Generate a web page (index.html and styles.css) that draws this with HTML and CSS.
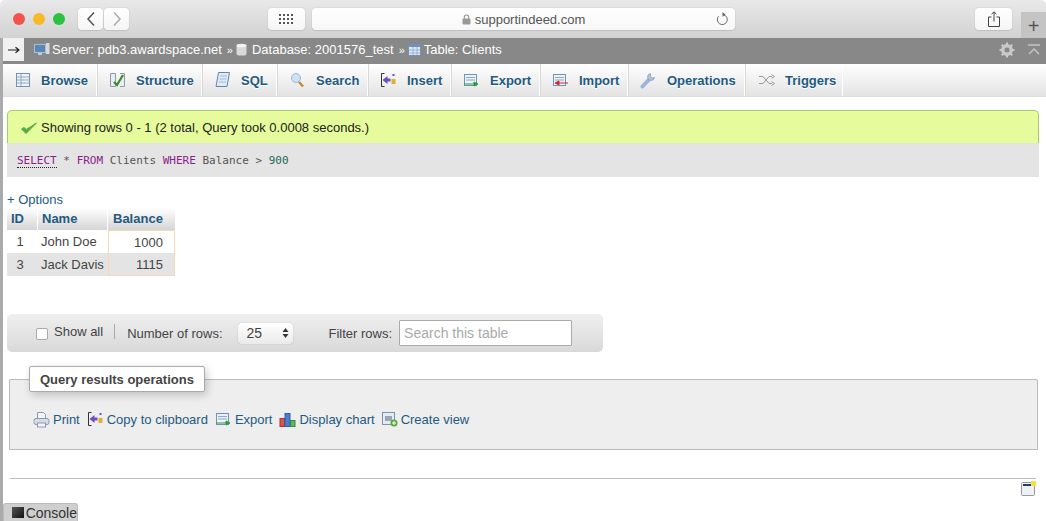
FILE: index.html
```html
<!DOCTYPE html>
<html lang="en">

<head>
    <meta charset="UTF-8">
    <title>supportindeed.com</title>
    <link rel="stylesheet" href="styles.css">
</head>

<body>
    <!-- Browser toolbar -->
    <header class="toolbar">
        <div class="lights">
            <span class="light red"></span>
            <span class="light yellow"></span>
            <span class="light green"></span>
        </div>
        <div class="history">
            <button class="tool tool-back" aria-label="Back">
                <svg width="10" height="16" viewBox="0 0 10 16"><path d="M8 1.500 2 8l6 6.500" fill="none" stroke="#555" stroke-width="1.500"/></svg>
            </button>
            <button class="tool tool-forward" aria-label="Forward">
                <svg width="10" height="16" viewBox="0 0 10 16"><path d="M2 1.500 8 8l-6 6.500" fill="none" stroke="#aaa" stroke-width="1.500"/></svg>
            </button>
        </div>
        <button class="tool tool-grid" aria-label="Top sites">
            <svg width="15" height="11" viewBox="0 0 15 11" fill="#555">
                <rect x="0" y="0" width="2" height="2"/><rect x="4" y="0" width="2" height="2"/><rect x="8" y="0" width="2" height="2"/><rect x="12" y="0" width="2" height="2"/>
                <rect x="0" y="4" width="2" height="2"/><rect x="4" y="4" width="2" height="2"/><rect x="8" y="4" width="2" height="2"/><rect x="12" y="4" width="2" height="2"/>
                <rect x="0" y="8" width="2" height="2"/><rect x="4" y="8" width="2" height="2"/><rect x="8" y="8" width="2" height="2"/><rect x="12" y="8" width="2" height="2"/>
            </svg>
        </button>
        <div class="address">
            <svg class="lock" width="9" height="11" viewBox="0 0 9 11"><rect x="0.500" y="4.500" width="8" height="6" rx="1" fill="#999"/><path d="M2.300 5V3.200a2.200 2.200 0 0 1 4.400 0V5" fill="none" stroke="#999" stroke-width="1.200"/></svg>
            <span>supportindeed.com</span>
            <svg class="reload" width="13" height="14" viewBox="0 0 13 14"><path d="M7.500 2.700a5 5 0 1 1-5 1.600" fill="none" stroke="#666"/><path d="M6.500 0v5l3-2.500z" fill="#666"/></svg>
        </div>
        <button class="tool tool-share" aria-label="Share">
            <svg width="12" height="16" viewBox="0 0 12 16" fill="none" stroke="#444"><path d="M3.500 6H.5v9.500h11V6h-3"/><path d="M6 10.500V1M3.500 3.200 6 .8l2.500 2.400"/></svg>
        </button>
        <div class="new-tab">+</div>
    </header>

    <div class="page">
        <!-- Breadcrumb -->
        <div class="crumbs">
            <span class="crumb-toggle">
                <svg width="12" height="8" viewBox="0 0 12 8"><path d="M0 4h10M7.500 1.200 11 4 7.500 6.800" fill="none" stroke="#222" stroke-width="1.200"/></svg>
            </span>
            <svg class="crumb-icon crumb-first" width="16" height="15" viewBox="0 0 16 15">
                <rect x="0.500" y="2.500" width="11" height="8" fill="#5d86b8" stroke="#a9bdd3"/>
                <rect x="4" y="11" width="4" height="2" fill="#c5ccd4"/>
                <rect x="12" y="1" width="3.500" height="11" fill="#d5d8dc"/>
            </svg>
            <a class="crumb">Server: pdb3.awardspace.net</a>
            <span class="crumb-sep">»</span>
            <svg class="crumb-icon crumb-db" width="11" height="13" viewBox="0 0 11 13">
                <rect x="0.500" y="1.500" width="10" height="11" rx="2" fill="#d9d9d9"/>
                <ellipse cx="5.500" cy="2.500" rx="5" ry="1.800" fill="#f2f2f2"/>
            </svg>
            <a class="crumb">Database: 2001576_test</a>
            <span class="crumb-sep">»</span>
            <svg class="crumb-icon crumb-table" width="14" height="14" viewBox="0 0 14 14">
                <rect x="0.500" y="1.500" width="12" height="11" fill="#dfe8f2" stroke="#6f93bd"/>
                <rect x="1" y="2" width="11" height="2" fill="#6f93bd"/>
                <path d="M1 7h11M1 10h11M5 4v8M9 4v8" stroke="#8ea9c8" stroke-width="0.800"/>
            </svg>
            <a class="crumb">Table: Clients</a>
            <span class="crumb-tools">
                <svg width="16" height="16" viewBox="0 0 16 16">
                    <circle cx="8" cy="8" r="4.500" fill="none" stroke="#c9c9c9" stroke-width="3"/>
                    <path d="M8 .5v15M.5 8h15M2.700 2.700l10.600 10.600M13.300 2.700 2.700 13.300" stroke="#c9c9c9" stroke-width="2"/>
                    <circle cx="8" cy="8" r="2.500" fill="#888"/>
                </svg>
                <svg width="12" height="11" viewBox="0 0 12 11" fill="none" stroke="#c4c4c4" stroke-width="1.500"><path d="M0 1h12M1 10l5-5 5 5"/></svg>
            </span>
        </div>

        <!-- Tabs -->
        <nav class="tabs">
            <a class="tab tab-browse">
                <svg width="16" height="16" viewBox="0 0 16 16"><rect x="1.500" y="1.500" width="13" height="13" fill="#eef3f8" stroke="#6f93bd"/><path d="M2 5h12M2 8h12M2 11h12M6 2v12" stroke="#8ea9c8"/></svg>
                Browse
            </a>
            <a class="tab tab-structure">
                <svg width="17" height="16" viewBox="0 0 17 16"><path d="M1.500 1.500v13h5v-13zM11 1.500h4.500v13H11" fill="#e8eef4" stroke="#8c9aa8"/><path d="M5 10l3 3 6-10" fill="none" stroke="#3d8a2c" stroke-width="2.200"/></svg>
                Structure
            </a>
            <a class="tab tab-sql">
                <svg width="17" height="18" viewBox="0 0 17 18"><path d="M4.500 1.500h11l-2.500 14h-11z" fill="#dfeaf6" stroke="#5f86b5"/><path d="M6 5h7M5.500 8h7M5 11h7" stroke="#a5bcd6"/></svg>
                SQL
            </a>
            <a class="tab tab-search">
                <svg width="17" height="16" viewBox="0 0 15 16"><path d="M9 10l4 4.500" stroke="#c48a3c" stroke-width="2.500"/><circle cx="6" cy="6" r="4.500" fill="#cfe2f5" stroke="#9db6cf"/></svg>
                Search
            </a>
            <a class="tab tab-insert">
                <svg width="17" height="16" viewBox="0 0 16 16"><path d="M4 1.500H1v13h3" fill="none" stroke="#333"/><path d="M2 8l5-4v2.500h3v3H7V12z" fill="#6a4fc4"/><rect x="11" y="7" width="4" height="5" fill="#d9b13a"/><rect x="12" y="2" width="2" height="2" fill="#6a4fc4"/></svg>
                Insert
            </a>
            <a class="tab tab-export">
                <svg width="17" height="15" viewBox="0 0 17 15"><rect x="1.500" y="1.500" width="12" height="11" fill="#eaf1f8" stroke="#6f93bd"/><path d="M3 4.500h9M3 7h9" stroke="#8ea9c8"/><path d="M1 11h12M11 9l4 2-4 2z" fill="#2f9a3b" stroke="#2f9a3b"/></svg>
                Export
            </a>
            <a class="tab tab-import">
                <svg width="17" height="15" viewBox="0 0 17 15"><rect x="1.500" y="1.500" width="12" height="11" fill="#eaf1f8" stroke="#6f93bd"/><path d="M3 4.500h9M3 7h9" stroke="#8ea9c8"/><path d="M16 10H5M7 8l-4 2 4 2z" fill="#d32b2b" stroke="#d32b2b"/></svg>
                Import
            </a>
            <a class="tab tab-operations">
                <svg width="17" height="18" viewBox="0 0 17 18"><path d="M2.500 15.500 10 7.500" stroke="#9db4d6" stroke-width="4" stroke-linecap="round"/><path d="M10.500 2.500a3.500 3.500 0 1 0 4 4l-2.500.5-1.500-1.500z" fill="#b4c5dc" stroke="#7c8fa8" stroke-width="0.600"/></svg>
                Operations
            </a>
            <a class="tab tab-triggers">
                <svg width="16" height="12" viewBox="0 0 16 12" fill="none" stroke="#999"><path d="M0 2.500h4l6 7h3M0 9.500h4l6-7h3"/><path d="M12.500 .5l3 2-3 2M12.500 7.500l3 2-3 2"/></svg>
                Triggers
            </a>
        </nav>

        <main class="content">
            <div class="message">
                <svg width="18" height="14" viewBox="0 0 18 14"><path d="M1.500 8 6 12.500 16.500 2 6.300 8.500 4 6.500z" fill="#5aa84a" stroke="#5aa84a" stroke-linejoin="round"/></svg>
                Showing rows 0 - 1 (2 total, Query took 0.0008 seconds.)
            </div>
            <div class="sql-box"><code><span class="kw kw-link">SELECT</span> * <span class="kw">FROM</span> Clients <span class="kw">WHERE</span> Balance &gt; <span class="num">900</span></code></div>

            <a class="options">+ Options</a>

            <table class="results">
                <thead>
                    <tr>
                        <th class="col-id">ID</th>
                        <th class="col-name">Name</th>
                        <th class="col-balance">Balance</th>
                    </tr>
                </thead>
                <tbody>
                    <tr>
                        <td class="cell-id">1</td>
                        <td>John Doe</td>
                        <td class="cell-num cell-top">1000</td>
                    </tr>
                    <tr class="row-even">
                        <td class="cell-id">3</td>
                        <td>Jack Davis</td>
                        <td class="cell-num cell-bottom">1115</td>
                    </tr>
                </tbody>
            </table>

            <div class="table-nav">
                <label class="show-all"><input type="checkbox"> <span>Show all</span></label>
                <span class="nav-sep"></span>
                <span class="rows-label">Number of rows:</span>
                <span class="rows-select">25
                    <svg width="7" height="12" viewBox="0 0 7 12" fill="#333"><path d="M3.500 1 6.500 5h-6zM3.500 11 .5 7h6z"/></svg>
                </span>
                <span class="filter-label">Filter rows:</span>
                <input class="filter-input" type="text" placeholder="Search this table">
            </div>

            <fieldset class="operations">
                <legend>Query results operations</legend>
                <a class="op op-print">
                    <svg width="17" height="17" viewBox="0 0 17 17"><path d="M4.500 7V1.500h6l2 2V7" fill="#f4f6f8" stroke="#8a9ab0"/><rect x="1" y="7.500" width="15" height="6" rx="2" fill="#d5dde6" stroke="#8a9ab0"/><rect x="4.500" y="12" width="8" height="4" fill="#f4f6f8" stroke="#8a9ab0"/></svg>
                    Print
                </a>
                <a class="op op-copy">
                    <svg width="17" height="16" viewBox="0 0 16 16"><path d="M4 1.500H1v13h3" fill="none" stroke="#333"/><path d="M2 8l5-4v2.500h3v3H7V12z" fill="#6a4fc4"/><rect x="11" y="7" width="4" height="5" fill="#d9b13a"/><rect x="12" y="2" width="2" height="2" fill="#6a4fc4"/></svg>
                    Copy to clipboard
                </a>
                <a class="op op-export">
                    <svg width="17" height="15" viewBox="0 0 17 15"><rect x="1.500" y="1.500" width="12" height="11" fill="#eaf1f8" stroke="#6f93bd"/><path d="M3 4.500h9M3 7h9" stroke="#8ea9c8"/><path d="M1 11h12M11 9l4 2-4 2z" fill="#2f9a3b" stroke="#2f9a3b"/></svg>
                    Export
                </a>
                <a class="op op-chart">
                    <svg width="17" height="15" viewBox="0 0 16 15"><rect x="0.500" y="6.500" width="4.500" height="8" fill="#d9534f" stroke="#a33"/><rect x="5.500" y="1.500" width="5" height="13" fill="#4a7fd0" stroke="#2f5ea8"/><rect x="11" y="8.500" width="4.500" height="6" fill="#5cb85c" stroke="#3a8a3a"/></svg>
                    Display chart
                </a>
                <a class="op op-view">
                    <svg width="16" height="16" viewBox="0 0 16 16"><rect x="0.500" y="1.500" width="12" height="12" fill="#e6ebf0" stroke="#7a93b0"/><rect x="3" y="5" width="7" height="5" fill="#9aa6b5"/><circle cx="12" cy="12" r="3.500" fill="#5aa83c"/><path d="M10 12h4M12 10v4" stroke="#fff"/></svg>
                    Create view
                </a>
            </fieldset>

            <div class="page-foot">
                <svg width="15" height="15" viewBox="0 0 15 15"><rect x="0.500" y="1.500" width="13" height="13" rx="1" fill="#eef1f5" stroke="#999"/><rect x="2" y="3" width="10" height="2" fill="#23405f"/><rect x="10" y="0" width="5" height="5" fill="#f2e23c"/></svg>
            </div>
        </main>
    </div>

    <div class="console">
        <span class="console-icon"></span>Console
    </div>
</body>

</html>
```

FILE: styles.css
```css
html,
body {
    height: 521px;
    overflow: hidden;
}

body {
    margin: 0;
    font-family: "Liberation Sans", Arial, sans-serif;
    font-size: 13px;
    color: #444;
    background: #fff;
}

/* Browser toolbar */
.toolbar {
    display: flex;
    align-items: flex-start;
    height: 38px;
    box-sizing: border-box;
    padding: 8px 0 0 13px;
    background: linear-gradient(#e9e9e9, #d2d2d2);
    border-radius: 5px 5px 0 0;
    position: relative;
}

.lights {
    display: flex;
    gap: 8px;
    padding-top: 5px;
    margin-right: 13px;
}

.light {
    width: 12px;
    height: 12px;
    border-radius: 50%;
}

.red {
    background: #f2544c;
}

.yellow {
    background: #f8b828;
}

.green {
    background: #2ac23e;
}

.history {
    display: flex;
    gap: 1px;
    margin-right: 139px;
}

.tool {
    display: flex;
    align-items: center;
    justify-content: center;
    height: 22px;
    padding: 0;
    border: none;
    border-radius: 4px;
    background: linear-gradient(#fff, #f5f5f5);
    box-shadow: 0 0 1px rgba(0, 0, 0, 0.3), 0 1px 1px rgba(0, 0, 0, 0.08);
}

.tool-back,
.tool-forward {
    width: 25px;
}

.tool-grid {
    width: 37px;
    margin-right: 7px;
}

.tool-share {
    width: 37px;
    margin-left: 240px;
}

.address {
    display: flex;
    align-items: center;
    justify-content: center;
    gap: 4px;
    width: 423px;
    height: 22px;
    border-radius: 4px;
    background: linear-gradient(#fff, #f7f7f7);
    box-shadow: 0 0 1px rgba(0, 0, 0, 0.3), 0 1px 1px rgba(0, 0, 0, 0.08);
    color: #555;
    font-family: "Liberation Sans", Arial, sans-serif;
    font-size: 13px;
    position: relative;
}

.reload {
    position: absolute;
    right: 6px;
    top: 4px;
}

.new-tab {
    position: absolute;
    right: 0;
    top: 12px;
    width: 25px;
    height: 26px;
    background: #c4c4c4;
    color: #555;
    font-size: 20px;
    line-height: 28px;
    text-align: center;
}

/* Page */
.page {
    height: 483px;
    border-left: 3px solid #aaa;
}

.crumbs {
    display: flex;
    align-items: center;
    height: 26px;
    padding-bottom: 3px;
    box-sizing: border-box;
    background: #888;
    color: #fff;
    font-size: 13px;
}

.crumb-toggle {
    display: flex;
    align-items: center;
    justify-content: center;
    align-self: flex-start;
    width: 21px;
    height: 23px;
    background: #f1f1f1;
}

.crumb-icon {
    margin-right: 2px;
}

.crumb-first {
    margin-left: 10px;
}

.crumb-db {
    margin-right: 5px;
}

.crumb-table {
    margin-right: 2px;
}

.crumb-sep {
    margin: 0 3px 0 5px;
    font-size: 11px;
}

.crumb-tools {
    display: flex;
    align-items: center;
    gap: 13px;
    margin-left: auto;
    padding-right: 6px;
}

/* Tabs */
.tabs {
    display: flex;
    height: 33px;
    background: linear-gradient(#fff, #e3e3e3);
    border-bottom: 1px solid #ddd;
    box-sizing: border-box;
}

.tab {
    display: flex;
    align-items: center;
    box-sizing: border-box;
    padding-left: 12px;
    border-right: 1px solid #fff;
    box-shadow: 1px 0 0 #d8d8d8 inset;
    color: #235a81;
    font-weight: bold;
    font-size: 13px;
    text-shadow: 0 1px 0 #fff;
}

.tab svg {
    margin-right: 10px;
    flex: none;
}

.tab-browse {
    width: 94px;
    box-shadow: none;
}

.tab-structure {
    width: 105px;
}

.tab-sql {
    width: 75px;
}

.tab-search {
    width: 91px;
}

.tab-insert {
    width: 83px;
}

.tab-export {
    width: 89px;
}

.tab-import {
    width: 88px;
}

.tab-operations {
    width: 117px;
}

.tab-triggers {
    width: 98px;
    padding-left: 14px;
}

/* Main content */
.content {
    padding: 13px 7px 0 4px;
}

.message {
    display: flex;
    align-items: center;
    gap: 3px;
    height: 33px;
    box-sizing: border-box;
    padding: 1px 0 0 12px;
    background: #e6fb9b;
    border: 1px solid #a6ca6c;
    border-bottom: none;
    border-radius: 5px 5px 0 0;
    color: #222;
    font-size: 13px;
}

.sql-box {
    height: 34px;
    box-sizing: border-box;
    padding: 11px 10px 0;
    background: #e4e4e4;
    font-family: "DejaVu Sans Mono", monospace;
    font-size: 11px;
    color: #555;
}

.sql-box code {
    font-family: inherit;
}

.kw {
    color: #8b1e8b;
}

.kw-link {
    border-bottom: 1px dotted #222;
}

.num {
    color: #1b6b55;
}

.options {
    display: block;
    margin-top: 14px;
    line-height: 17px;
    color: #235a81;
    font-size: 13px;
}

.results {
    border-collapse: separate;
    border-spacing: 0;
    width: 168px;
    table-layout: fixed;
}

.results th {
    height: 22px;
    padding: 0 4px 2px;
    box-sizing: border-box;
    background: linear-gradient(#fff, #d5d5d5);
    border-right: 1px solid #fff;
    color: #235a81;
    font-size: 13px;
    text-align: left;
}

.col-id {
    width: 31px;
}

.col-name {
    width: 70px;
}

.col-balance {
    width: 67px;
}

.results .col-balance {
    padding-left: 5px;
    border-right: none;
}

.results td {
    height: 23px;
    padding: 0 3px;
    box-sizing: border-box;
    color: #444;
    font-size: 13px;
    white-space: nowrap;
}

.row-even td {
    background: #e4e4e4;
}

.results .cell-id {
    text-align: center;
    padding-right: 8px;
}

.results .cell-num {
    padding-right: 11px;
    text-align: right;
    border-left: 1px solid #f6d9b4;
    border-right: 1px solid #f6d9b4;
}

.cell-top {
    border-top: 1px solid #f6d9b4;
}

.cell-bottom {
    border-bottom: 1px solid #f6d9b4;
}

/* Table navigation */
.table-nav {
    display: flex;
    align-items: center;
    width: 596px;
    height: 38px;
    box-sizing: border-box;
    margin-top: 38px;
    padding-left: 29px;
    background: linear-gradient(#efefef, #d9d9d9);
    border-radius: 5px;
    color: #444;
    font-size: 13px;
}

.show-all {
    display: flex;
    align-items: center;
}

.show-all input {
    appearance: none;
    width: 12px;
    height: 12px;
    box-sizing: border-box;
    margin: 2px 6px 0 0;
    background: #fff;
    border: 1px solid #aaa;
    border-radius: 2px;
}

.show-all span {
    position: relative;
    top: -2px;
}

.nav-sep {
    width: 1px;
    height: 15px;
    margin: 0 12px 4px 11px;
    background: #aaa;
}

.rows-select {
    display: flex;
    align-items: center;
    justify-content: space-between;
    width: 55px;
    height: 21px;
    box-sizing: border-box;
    margin: 0 36px 0 15px;
    padding: 0 4px 0 9px;
    background: linear-gradient(#fff, #eaeaea);
    border-radius: 4px;
    box-shadow: 0 0 1px rgba(0, 0, 0, 0.4);
    font-size: 14px;
}

.filter-input {
    width: 173px;
    height: 26px;
    box-sizing: border-box;
    margin-left: 7px;
    padding: 0 4px;
    background: #fff;
    border: 1px solid #aaa;
    border-radius: 1px;
    font-family: "Liberation Sans", Arial, sans-serif;
    font-size: 14px;
}

.filter-input::placeholder {
    color: #aaa;
}

/* Query results operations */
.operations {
    display: flex;
    align-items: center;
    height: 84px;
    box-sizing: border-box;
    min-width: 0;
    margin: 14px 1px 0 2px;
    padding: 0 0 3px 23px;
    background: #eee;
    border: 1px solid #bbb;
    border-radius: 2px 2px 0 0;
}

.operations legend {
    height: 26px;
    box-sizing: border-box;
    margin-left: -4px;
    padding: 0 10px;
    background: #fff;
    border: 1px solid #aaa;
    border-radius: 2px;
    box-shadow: 2px 3px 8px rgba(0, 0, 0, 0.2);
    color: #444;
    font-size: 13px;
    font-weight: bold;
    line-height: 25px;
}

.op {
    display: inline-flex;
    align-items: center;
    margin-right: 7px;
    color: #235a81;
    font-size: 13px;
}

.op svg {
    margin-right: 3px;
}

.page-foot {
    display: flex;
    justify-content: flex-end;
    margin: 28px 3px 0 3px;
    padding: 2px 0 0;
    border-top: 1px solid #bbb;
}

/* Console bar */
.console {
    position: absolute;
    left: 3px;
    bottom: 0;
    display: flex;
    align-items: center;
    gap: 2px;
    width: 75px;
    height: 18px;
    box-sizing: border-box;
    padding-left: 8px;
    background: #cfcfcf;
    border-radius: 3px 3px 0 0;
    border: 1px solid #bbb;
    border-bottom: none;
    color: #333;
    font-size: 14px;
}

.console-icon {
    width: 13px;
    height: 11px;
    background: linear-gradient(135deg, #555, #111);
}
```
